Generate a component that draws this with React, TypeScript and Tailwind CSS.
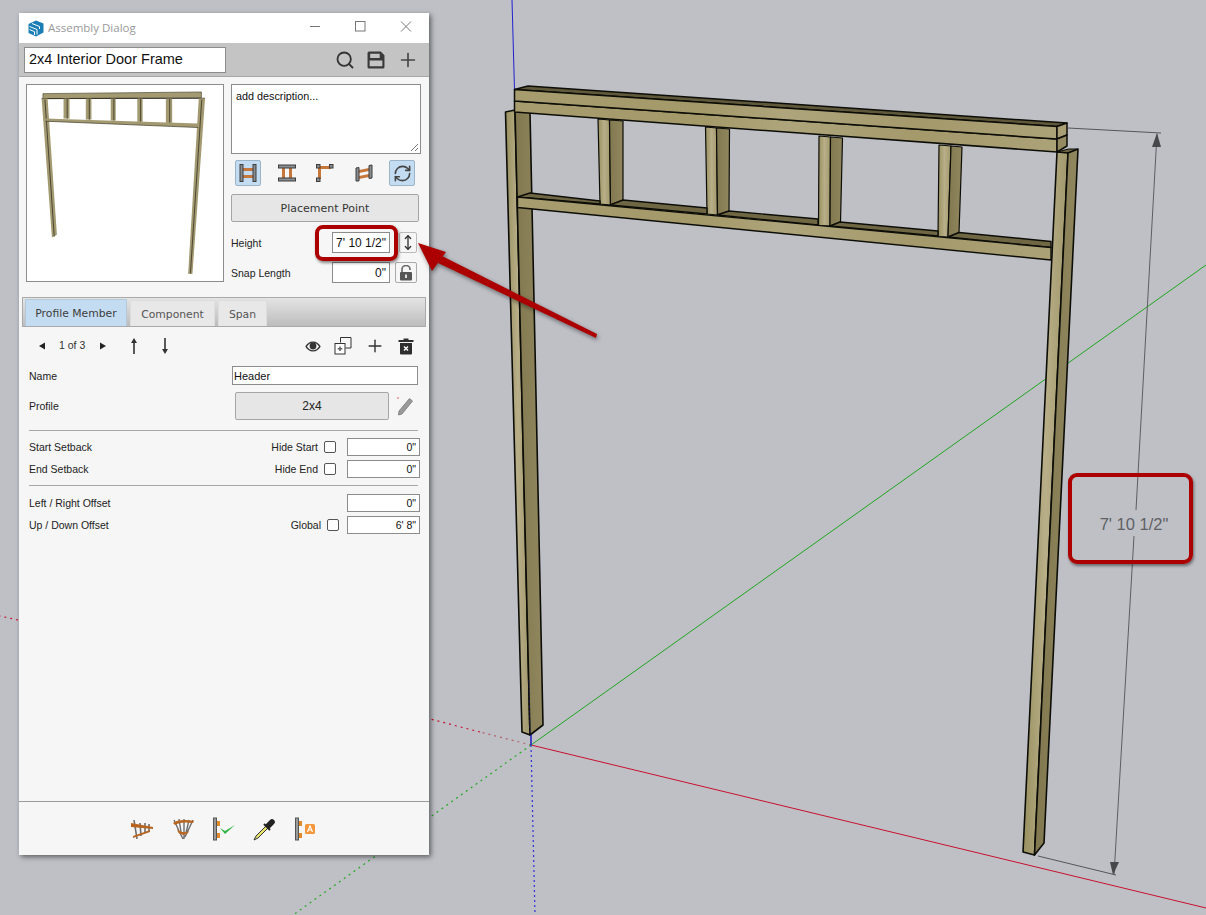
import { MoveVertical, Plus, RefreshCw, Search } from "lucide-react";

const EDGE = "#0d0d08";

function Post({ light, dark, w = 1.6 }: { light: string; dark: string; w?: number }) {
  return (
    <g stroke={EDGE} strokeWidth={w} strokeLinejoin="round">
      <polygon points={light} fill="url(#woodLight)" />
      <polygon points={dark} fill="url(#woodDark)" />
    </g>
  );
}

function Stud({ l, m, r, top, bl, bm, br }: { l: number; m: number; r: number; top: number; bl: [number, number]; bm: [number, number]; br: [number, number] }) {
  return (
    <Post
      w={1.2}
      light={`${l},${top} ${m},${top + 1} ${bm[0]},${bm[1]} ${bl[0]},${bl[1]}`}
      dark={`${m},${top + 1} ${r},${top + 2} ${br[0]},${br[1]} ${bm[0]},${bm[1]}`}
    />
  );
}

function Scene() {
  return (
    <svg className="absolute inset-0" width="1206" height="915" viewBox="0 0 1206 915">
      <defs>
        <linearGradient id="woodLight" x1="0" y1="0" x2="1" y2="0">
          <stop offset="0" stopColor="#98905f" />
          <stop offset="0.5" stopColor="#b8ae88" />
          <stop offset="1" stopColor="#a2986c" />
        </linearGradient>
        <linearGradient id="woodDark" x1="0" y1="0" x2="1" y2="0">
          <stop offset="0" stopColor="#817850" />
          <stop offset="1" stopColor="#91875e" />
        </linearGradient>
        <linearGradient id="plate" x1="0" y1="0" x2="1" y2="0">
          <stop offset="0" stopColor="#a69c6e" />
          <stop offset="0.35" stopColor="#a39969" />
          <stop offset="0.5" stopColor="#afa57c" />
          <stop offset="0.75" stopColor="#a3996b" />
          <stop offset="1" stopColor="#aca278" />
        </linearGradient>
      </defs>

      {/* axes */}
      <line x1="512" y1="0" x2="514.5" y2="90" stroke="#2020d0" strokeWidth="1" />
      <line x1="531" y1="745" x2="1206" y2="908" stroke="#c8102e" strokeWidth="1" />
      <line x1="531" y1="745" x2="1206" y2="265" stroke="#1fa51f" strokeWidth="1" />
      <line x1="531" y1="745" x2="480" y2="732" stroke="#b0626a" strokeWidth="1.2" strokeDasharray="2 4" />
      <line x1="480" y1="732" x2="430" y2="719" stroke="#c8102e" strokeWidth="1.2" strokeDasharray="2 4" />
      <line x1="18" y1="620" x2="0" y2="616" stroke="#c8102e" strokeWidth="1.2" strokeDasharray="2 4" />
      <line x1="531" y1="745" x2="293" y2="915" stroke="#22a822" strokeWidth="1.2" strokeDasharray="2 4" />
      <line x1="531" y1="745" x2="535" y2="915" stroke="#3030d8" strokeWidth="1.2" strokeDasharray="2 3" />

      {/* dimension */}
      <line x1="1068" y1="128" x2="1161" y2="133" stroke="#55565a" strokeWidth="1" />
      <line x1="1038" y1="856" x2="1116" y2="875" stroke="#55565a" strokeWidth="1" />
      <line x1="1157" y1="134" x2="1136" y2="510" stroke="#5c5d62" strokeWidth="1" />
      <line x1="1134" y1="536" x2="1114" y2="875" stroke="#5c5d62" strokeWidth="1" />
      <polygon points="1157,133 1152,147 1161,147" fill="#47484c" />
      <polygon points="1113,875 1110,862 1119,862" fill="#47484c" />
      <text x="1134" y="530" textAnchor="middle" fontFamily="'Liberation Sans', sans-serif" fontSize="16.5" fill="#606165">
        7' 10 1/2"
      </text>

      {/* left post */}
      <Post light="505.5,112 515,110 530,735 522,732" dark="515,110 530,112 543,725 530,735" />

      {/* studs */}
      <Stud l={598} m={609.5} r={623} top={119} bl={[600, 204]} bm={[610.5, 205]} br={[623, 200]} />
      <Stud l={705.5} m={716.5} r={729.5} top={127} bl={[707, 214]} bm={[717.5, 215]} br={[729, 211]} />
      <Stud l={819} m={830.5} r={842.5} top={136} bl={[818.5, 225.5]} bm={[830, 226]} br={[840.5, 222]} />
      <Stud l={939} m={951} r={962} top={145} bl={[938, 236.5]} bm={[948, 237]} br={[959, 232.5]} />

      {/* mid rail */}
      <g stroke={EDGE} strokeWidth="1.4" strokeLinejoin="round">
        <polygon points="517.5,197 530,193 600,201 600,204" fill="#6f6744" />
        <polygon points="623,200 707,208 707,214 610,205" fill="#6f6744" />
        <polygon points="729,211 818,219 818,225 717,215" fill="#6f6744" />
        <polygon points="840,222 938,231 938,236 830,226" fill="#6f6744" />
        <polygon points="959,232.5 1051,241.5 1051,247.5 948,237" fill="#6f6744" />
        <polygon points="517.5,197 1051,247.5 1051,260 517.5,207.5" fill="url(#plate)" />
      </g>

      {/* plates */}
      <g stroke={EDGE} strokeWidth="1.5" strokeLinejoin="round">
        <polygon points="514.5,89.5 528,86 1067,123 1057,126.5" fill="#5f583a" />
        <polygon points="514.5,101 1057,139 1057,152 514.5,112" fill="url(#plate)" />
        <polygon points="514.5,89.5 1057,126.5 1057,139 514.5,101" fill="url(#plate)" />
        <polygon points="1057,126.5 1067,123 1067,135 1057,139" fill="#a99f74" />
        <polygon points="1057,139 1067,135 1067,146 1057,152" fill="#958b62" />
      </g>

      {/* right post */}
      <polygon points="1057.5,152 1068.5,149 1078,149 1068,153" fill="#6f6744" stroke={EDGE} strokeWidth="1.2" />
      <Post light="1057,152 1068,153 1034.5,855 1023,852" dark="1068,153 1078,149 1044,843 1034.5,855" />
      <line x1="529" y1="680" x2="530" y2="735" stroke="#2a2a80" strokeWidth="1" strokeDasharray="3 2" opacity="0.5" />
      <line x1="531" y1="735" x2="531" y2="745" stroke="#1a1ac0" strokeWidth="1.5" />
    </svg>
  );
}

function SketchUpLogo() {
  return (
    <svg width="16" height="17" viewBox="0 0 16 17">
      <path d="M8 0.5 15.5 3.5V12.5L8 16.5 0.5 13V4Z" fill="#1b7fb5" />
      <path d="M4 3.5 11.5 6.5V9M1.5 6.5 9 9.5V14.5M1.5 9.5 6.5 11.7V15" fill="none" stroke="#fff" strokeWidth="1" />
    </svg>
  );
}

function SaveIcon() {
  return (
    <svg width="18" height="18" viewBox="0 0 17 17" fill="#3a3a3a">
      <path d="M2 0.5H13L16.5 4V15A1.5 1.5 0 0 1 15 16.5H2A1.5 1.5 0 0 1 0.5 15V2A1.5 1.5 0 0 1 2 0.5ZM3 2.5V6.5H12V2.5ZM2.5 9V14.5H14.5V9Z" fillRule="evenodd" />
    </svg>
  );
}

function Preview() {
  const studs: [number, number, number][] = [
    [130, 148, 115],
    [197, 214, 118],
    [272, 287, 121],
    [352, 368, 125],
    [438, 457, 128],
  ];
  return (
    <svg width="196" height="196" viewBox="20 14 590 590">
      <polygon points="68,40 545,35 545,52 68,55" fill="#a39a72" stroke="#4a4632" strokeWidth="2" />
      <line x1="64" y1="55" x2="556" y2="54" stroke="#3a3626" strokeWidth="3" />
      <polygon points="64,55 82,55 110,465 95,473" fill="#a39a72" />
      <line x1="74" y1="58" x2="102" y2="470" stroke="#4a4632" strokeWidth="3" />
      <polygon points="537,55 556,55 518,583 505,583" fill="#a39a72" />
      <line x1="546" y1="58" x2="512" y2="580" stroke="#4a4632" strokeWidth="3" />
      {studs.map(([a, b, y]) => (
        <g key={a}>
          <rect x={a} y={55} width={b - a} height={y - 55} fill="#a39a72" />
          <line x1={(a + b) / 2 + 2} y1={56} x2={(a + b) / 2 + 2} y2={y} stroke="#4a4632" strokeWidth="3" />
        </g>
      ))}
      <polygon points="75,115 535,130 535,142 75,123" fill="#a39a72" />
      <line x1="75" y1="123" x2="535" y2="142" stroke="#3a3626" strokeWidth="2" />
    </svg>
  );
}

function FrameIcon({ kind }: { kind: number }) {
  const gray = "#8a8d8f";
  const orange = "#c8773a";
  const dark = "#3d3d3d";
  if (kind === 0) {
    return (
      <svg width="18" height="18" viewBox="0 0 18 18">
        <rect x="4" y="4" width="10" height="3" fill={orange} />
        <rect x="4" y="11" width="10" height="3" fill={orange} />
        <rect x="1" y="0.5" width="3" height="17" fill={gray} stroke={dark} strokeWidth="1" />
        <rect x="14" y="0.5" width="3" height="17" fill={gray} stroke={dark} strokeWidth="1" />
      </svg>
    );
  }
  if (kind === 1) {
    return (
      <svg width="18" height="18" viewBox="0 0 18 18">
        <rect x="4" y="3" width="3" height="12" fill={orange} />
        <rect x="11" y="3" width="3" height="12" fill={orange} />
        <rect x="0.5" y="1" width="17" height="3" fill={gray} stroke={dark} strokeWidth="1" />
        <rect x="0.5" y="14" width="17" height="3" fill={gray} stroke={dark} strokeWidth="1" />
      </svg>
    );
  }
  if (kind === 2) {
    return (
      <svg width="18" height="18" viewBox="0 0 18 18">
        <rect x="2" y="2" width="13" height="3" fill={orange} />
        <rect x="2" y="3" width="3" height="12" fill={orange} />
        <rect x="0.5" y="0.5" width="3.5" height="3.5" fill={gray} stroke={dark} strokeWidth="1" />
        <rect x="13.5" y="0.5" width="3.5" height="3.5" fill={gray} stroke={dark} strokeWidth="1" />
        <rect x="0.5" y="14" width="3.5" height="3.5" fill={gray} stroke={dark} strokeWidth="1" />
      </svg>
    );
  }
  return (
    <svg width="18" height="18" viewBox="0 0 18 18">
      <polygon points="4,6 14,4 14,7 4,9" fill={orange} />
      <polygon points="4,12 14,10 14,13 4,15" fill={orange} />
      <polygon points="1,4 4,3.5 4,17 1,17" fill={gray} stroke={dark} strokeWidth="1" />
      <polygon points="14,1.5 17,1 17,14 14,14.5" fill={gray} stroke={dark} strokeWidth="1" />
    </svg>
  );
}

function FieldInput({ value, className }: { value: string; className: string }) {
  return (
    <div className={`flex items-center justify-end bg-white border border-[#8c8c8c] pr-[3px] text-[#111] ${className}`}>{value}</div>
  );
}

function SetbackRow({ label, check, value, gapRight }: { label: string; check?: string; value: string; gapRight?: boolean }) {
  return (
    <div className="-mr-px flex h-[18px] items-center">
      <span className="flex-1 pt-[2px]">{label}</span>
      {check && <span className="mr-[6px] pt-[2px]">{check}</span>}
      {check && <span className="h-3 w-3 rounded-[2px] border border-[#555] bg-white" />}
      <FieldInput value={value} className={`h-[18px] w-[73px] pt-[2px] ${gapRight ? "ml-2" : "ml-[11px]"}`} />
    </div>
  );
}

function LockIcon() {
  return (
    <svg width="14" height="16" viewBox="0 0 14 16">
      <path d="M3 7V4.5A4 4 0 0 1 11 4.5V5" fill="none" stroke="#666" strokeWidth="1.6" />
      <rect x="1" y="7" width="12" height="8.5" rx="1" fill="#555" />
      <rect x="6" y="9.5" width="2" height="3.5" fill="#ddd" />
    </svg>
  );
}

function Eye() {
  return (
    <svg width="16" height="11" viewBox="0 0 16 11" fill="#333">
      <path d="M8 0.5C4.5 0.5 1.8 2.6 0.3 5.5 1.8 8.4 4.5 10.5 8 10.5S14.2 8.4 15.7 5.5C14.2 2.6 11.5 0.5 8 0.5ZM8 1.8C10.5 1.8 12.7 3.3 14 5.5 12.7 7.7 10.5 9.2 8 9.2S3.3 7.7 2 5.5C3.3 3.3 5.5 1.8 8 1.8Z" fillRule="evenodd" />
      <circle cx="8" cy="5" r="3.4" />
    </svg>
  );
}

function CopyAdd() {
  return (
    <svg width="18" height="18" viewBox="0 0 18 18" fill="none" stroke="#333" strokeWidth="1">
      <path d="M6.5 5.5V0.5H17V11H11.5" />
      <rect x="1" y="6.5" width="10" height="10.5" fill="#fff" />
      <path d="M6 9.5V14M3.7 11.7H8.3" stroke="#666" strokeWidth="1.6" />
    </svg>
  );
}

function Trash() {
  return (
    <svg width="16" height="17" viewBox="0 0 16 17">
      <path d="M5.5 0.5H10.5V2H15.5V4H0.5V2H5.5Z" fill="#2e2e2e" />
      <path d="M2 5H14V15.5A1 1 0 0 1 13 16.5H3A1 1 0 0 1 2 15.5Z" fill="#2e2e2e" />
      <path d="M6 8.5 10 12.5M10 8.5 6 12.5" stroke="#fff" strokeWidth="1.4" />
    </svg>
  );
}

function Pencil() {
  return (
    <svg width="18" height="20" viewBox="0 0 18 20">
      <circle cx="2" cy="2" r="0.8" fill="#e05050" />
      <path d="M13.5 2.5 16.5 5 6 18 2.5 19 3 15Z" fill="#9a9a9a" stroke="#777" strokeWidth="0.8" />
    </svg>
  );
}

function ThinArrow({ down }: { down?: boolean }) {
  return (
    <svg width="20" height="18" viewBox="0 0 20 18" className={down ? "rotate-180" : ""}>
      <path d="M10 4V17" stroke="#333" strokeWidth="1.6" />
      <path d="M10 1 13 6H7Z" fill="#333" />
    </svg>
  );
}

function BottomIcons() {
  const orange = "#b9651f";
  const gray = "#6d6d6d";
  return (
    <div className="flex justify-center gap-[17px]">
      <svg width="24" height="24" viewBox="0 0 24 24">
        <path d="M4 3 7 22M10 6 11 19M15 6V16M19 7V14" stroke={gray} strokeWidth="1.6" fill="none" />
        <path d="M1 6 23 10V12L1 10ZM3 19 20 13V15L3 21Z" fill={orange} />
      </svg>
      <svg width="24" height="24" viewBox="0 0 24 24">
        <path d="M3 3 8 14 12 22M8 2 10 15M13 2V22M18 3 15 16M22 3 14 20" stroke={gray} strokeWidth="1.4" fill="none" />
        <path d="M2 6C8 2 16 3 23 4L22 6C16 5 8 5 4 8ZM6 12C10 16 14 16 18 14L17 16C13 19 9 18 7 15Z" fill={orange} />
      </svg>
      <svg width="24" height="24" viewBox="0 0 24 24">
        <rect x="1.5" y="1" width="3" height="22" fill="#9a9a9a" stroke="#555" strokeWidth="1" />
        <rect x="5" y="4" width="3" height="5" fill="#e08a2a" />
        <rect x="5" y="16" width="3" height="5" fill="#e08a2a" />
        <path d="M8 11 13 17 23 8 13 14Z" fill="#2fb344" />
      </svg>
      <svg width="24" height="24" viewBox="0 0 24 24">
        <path d="M1 23 3 19 13 9 15 11 5 21Z" fill="#e8e36a" stroke="#333" strokeWidth="1" />
        <path d="M12 8 17 3A2.8 2.8 0 0 1 21 7L16 12Z" fill="#222" />
        <path d="M11 7 17 13" stroke="#222" strokeWidth="2" />
      </svg>
      <svg width="24" height="24" viewBox="0 0 24 24">
        <rect x="1.5" y="1" width="3" height="22" fill="#9a9a9a" stroke="#555" strokeWidth="1" />
        <rect x="5" y="4" width="3" height="5" fill="#e08a2a" />
        <rect x="5" y="16" width="3" height="5" fill="#e08a2a" />
        <rect x="11" y="7" width="10" height="10" rx="1.5" fill="#f3973c" />
        <path d="M13.5 15 16 9 18.5 15M14.5 13H17.5" stroke="#fff" strokeWidth="1.2" fill="none" />
      </svg>
    </div>
  );
}

function Dialog() {
  return (
    <div className="absolute left-[19px] top-[13px] flex h-[842px] w-[410px] flex-col overflow-hidden bg-[#f6f6f6] font-['DejaVu_Sans',sans-serif] text-[10px] text-[#222] shadow-[2px_2px_5px_rgba(0,0,0,0.5)]">
      <div className="flex h-[30px] shrink-0 items-center bg-white pl-[9px]">
        <SketchUpLogo />
        <span className="ml-[4px] flex-1 font-['Open_Sans',sans-serif] text-[11.5px] text-[#999]">Assembly Dialog</span>
        <svg width="102" height="14" viewBox="0 0 102 14" fill="none" stroke="#777" className="-mt-[2px] mr-[17px]">
          <path d="M0 6.5H10" />
          <rect x="45.5" y="1.5" width="9.5" height="9.5" />
          <path d="M91 1.5 101 11.5M101 1.5 91 11.5" />
        </svg>
      </div>

      <div className="flex h-[34px] shrink-0 items-center border-b border-[#a6a6a6] bg-[#c4c4c4] pl-[5px] pr-[10px]">
        <div className="flex h-[26px] w-[202px] items-center border border-[#8c8c8c] bg-white pl-1 font-['Liberation_Sans',sans-serif] text-[14.5px] text-[#111]">
          2x4 Interior Door Frame
        </div>
        <div className="ml-auto flex items-center gap-3">
          <Search size={20} strokeWidth={2.2} color="#333" />
          <SaveIcon />
          <Plus size={22} strokeWidth={1.8} color="#444" />
        </div>
      </div>

      <div className="flex shrink-0 pl-[7px] pr-[8px] pt-[7px]">
        <div className="h-[198px] w-[198px] border border-[#8c8c8c] bg-white">
          <Preview />
        </div>
        <div className="ml-[7px] flex w-[190px] flex-col">
          <div className="relative h-[70px] border border-[#8c8c8c] bg-white px-1 py-[3px] font-['Liberation_Sans',sans-serif] text-[10.8px] text-[#111]">
            add description...
            <svg width="9" height="9" viewBox="0 0 9 9" className="absolute bottom-[1px] right-[1px]" stroke="#777">
              <path d="M1 8 8 1M5 8 8 5" />
            </svg>
          </div>
          <div className="mt-[6px] flex gap-[12.5px] pl-1">
            {[0, 1, 2, 3].map((i) => (
              <div
                key={i}
                className={`flex h-[26px] w-[26px] items-center justify-center rounded-[2px] ${i === 0 ? "border border-[#9cb4c8] bg-[#c4dcf2]" : ""}`}
              >
                <FrameIcon kind={i} />
              </div>
            ))}
            <div className="flex h-[26px] w-[26px] items-center justify-center rounded-[2px] border border-[#9cb4c8] bg-[#c4dcf2]">
              <RefreshCw size={19} strokeWidth={2} color="#444" />
            </div>
          </div>
          <div className="mt-2 flex h-[28px] w-[188px] items-center justify-center rounded-[2px] border border-[#a5a5a5] bg-[#e6e6e6] pt-[3px] text-[11px] text-[#333]">
            Placement Point
          </div>
          <div className="mt-[10px] flex h-[21px] items-center font-['Liberation_Sans',sans-serif] text-[10.5px]">
            <span className="w-[101px] pt-[2px]">Height</span>
            <FieldInput value={`7' 10 1/2"`} className="h-[21px] w-[58px] text-[12px]" />
            <div className="ml-[9px] flex h-[21px] w-[18px] items-center justify-center rounded-[2px] border border-[#bbb]">
              <MoveVertical size={17} strokeWidth={2} color="#333" />
            </div>
          </div>
          <div className="mt-[9px] flex h-[21px] items-center font-['Liberation_Sans',sans-serif] text-[10.5px]">
            <span className="w-[101px] pt-[2px]">Snap Length</span>
            <FieldInput value={`0"`} className="h-[21px] w-[58px] text-[12px]" />
            <div className="ml-[5px] flex h-[21px] w-[22px] items-center justify-center rounded-[2px] border border-[#aaa]">
              <LockIcon />
            </div>
          </div>
        </div>
      </div>

      <div className="mx-[3px] mt-[14px] flex h-[30px] shrink-0 items-end gap-[3px] border border-[#aaa] bg-gradient-to-b from-[#e4e4e4] to-[#bdbdbd] pl-[2px] pr-0 text-[10.8px] text-[#555]">
        <div className="flex h-[27px] w-[102px] items-center justify-center border border-b-0 border-[#b5c9da] bg-[#c4dcf2] pt-[3px] text-[#3c3c3c]">Profile Member</div>
        <div className="flex h-[26px] w-[85px] items-center justify-center border border-b-0 border-[#ddd] bg-[#e8e8e8] pt-[3px]">Component</div>
        <div className="flex h-[26px] w-[49px] items-center justify-center border border-b-0 border-[#ddd] bg-[#e8e8e8] pt-[3px]">Span</div>
      </div>

      <div className="flex flex-1 flex-col px-[10px] font-['Liberation_Sans',sans-serif] text-[10.5px]">
        <div className="mt-[7px] flex h-[24px] items-center">
          <svg width="8" height="8" viewBox="0 0 8 8" className="ml-[9px]" fill="#222"><path d="M7 0.5V7.5L1 4Z" /></svg>
          <span className="ml-[13px] w-[27px] whitespace-nowrap text-[#333]">1 of 3</span>
          <svg width="8" height="8" viewBox="0 0 8 8" className="ml-[13px]" fill="#222"><path d="M1 0.5V7.5L7 4Z" /></svg>
          <span className="ml-[17px]"><ThinArrow /></span>
          <span className="ml-[11px]"><ThinArrow down /></span>
          <div className="ml-auto flex items-center gap-[13px] pr-[5px]">
            <Eye />
            <CopyAdd />
            <Plus size={20} strokeWidth={1.7} color="#333" />
            <Trash />
          </div>
        </div>

        <div className="mt-[8px] flex h-[19px] items-center">
          <span className="w-[203px] pt-[2px]">Name</span>
          <div className="flex h-[19px] w-[186px] items-center border border-[#8c8c8c] bg-white pl-[1px] pt-[2px] text-[11px] text-[#111]">Header</div>
        </div>
        <div className="mt-[7px] flex h-[28px] items-center">
          <span className="w-[206px] pt-[2px]">Profile</span>
          <div className="flex h-[28px] w-[154px] items-center justify-center rounded-[2px] border border-[#a5a5a5] bg-[#e6e6e6] text-[12px]">2x4</div>
          <span className="ml-[7px]"><Pencil /></span>
        </div>

        <div className="mr-[1px] mt-[10px] h-px bg-[#a8a8a8]" />

        <div className="mt-[7px] flex flex-col gap-[4px]">
          <SetbackRow label="Start Setback" check="Hide Start" value={`0"`} />
          <SetbackRow label="End Setback" check="Hide End" value={`0"`} />
        </div>

        <div className="mr-[1px] mt-[7px] h-px bg-[#a8a8a8]" />

        <div className="mt-[8px] flex flex-col gap-[4px]">
          <SetbackRow label="Left / Right Offset" value={`0"`} />
          <SetbackRow label="Up / Down Offset" check="Global" value={`6' 8"`} gapRight />
        </div>
      </div>

      <div className="flex h-[54px] shrink-0 items-center justify-center border-t border-[#9a9a9a] bg-[#f6f6f6]">
        <BottomIcons />
      </div>
    </div>
  );
}

function Annotations() {
  return (
    <>
      <div className="absolute left-[315px] top-[225px] h-[36px] w-[83px] rounded-[8px] border-[4px] border-[#ac0000] shadow-[1px_2px_3px_rgba(0,0,0,0.45)]" />
      <div className="absolute left-[1068px] top-[473px] h-[91px] w-[125px] rounded-[9px] border-[4px] border-[#ac0000] shadow-[1px_2px_3px_rgba(0,0,0,0.45)]" />
      <svg className="absolute inset-0 drop-shadow-[1px_2px_2px_rgba(0,0,0,0.45)]" width="1206" height="915" viewBox="0 0 1206 915">
        <polygon points="597,334 596,338 438,263 442,256" fill="#ac0000" />
        <polygon points="418,243 446,252 432,271" fill="#ac0000" />
      </svg>
    </>
  );
}

export default function App() {
  return (
    <div className="relative h-[915px] w-[1206px] overflow-hidden bg-[#bfc0c6]">
      <Scene />
      <Dialog />
      <Annotations />
    </div>
  );
}
